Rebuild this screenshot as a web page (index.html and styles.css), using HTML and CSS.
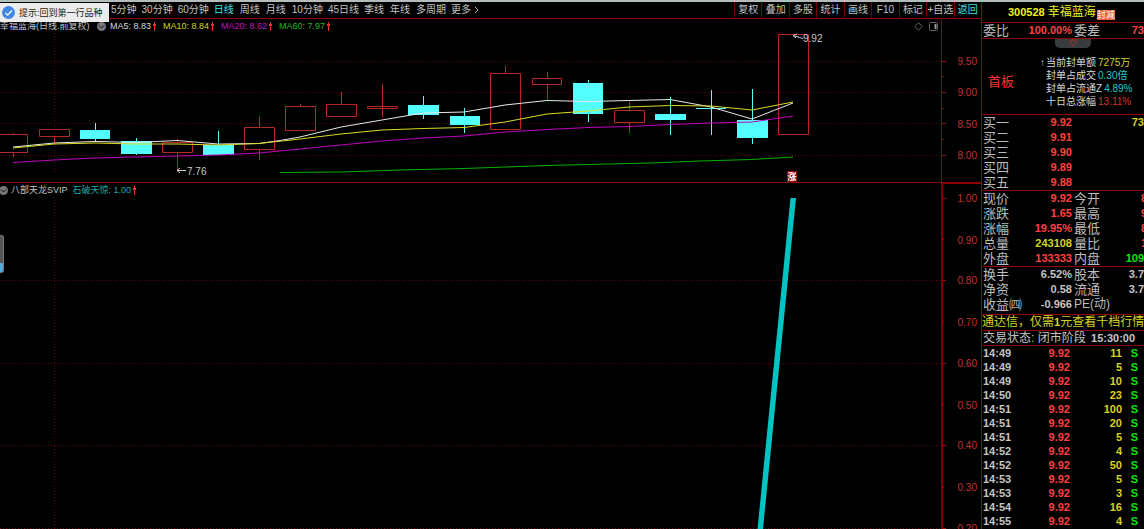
FILE: index.html
```html
<!DOCTYPE html>
<html lang="zh-CN">
<head>
<meta charset="utf-8">
<title>幸福蓝海 300528</title>
<link rel="stylesheet" href="styles.css">
</head>
<body>
<div class="app">
  <main class="main">
    <header class="toolbar">
      <nav class="periods">
        <button>5分钟</button><button>30分钟</button><button>60分钟</button><button class="short active">日线</button><button class="short">周线</button><button class="short">月线</button><button>10分钟</button><button>45日线</button><button class="short">季线</button><button class="short">年线</button><button>多周期</button><button class="more">更多<svg width="5" height="8" viewBox="0 0 5 8"><path d="M1 1l3 3-3 3" fill="none" stroke="#b8b8b8"/></svg></button>
      </nav>
      <div class="tools">
        <button>复权</button><button>叠加</button><button>多股</button><button>统计</button><button>画线</button><button>F10</button><button>标记</button><button>+自选</button><button class="active">返回</button>
      </div>
    </header>

    <section class="panel price">
      <div class="plot">
        <div class="legend">
          <span class="name">幸福蓝海(日线.前复权)</span>
          <svg class="drop" width="9" height="9" viewBox="0 0 9 9"><circle cx="4.5" cy="4.5" r="4.5" fill="#777"/><path d="M2 3.5l2.500 2.500 2.500-2.500" fill="none" stroke="#111"/></svg>
          <span class="ma white">MA5: 8.83<i class="up"></i></span>
          <span class="ma yellow">MA10: 8.84<i class="up"></i></span>
          <span class="ma magenta">MA20: 8.62<i class="up"></i></span>
          <span class="ma green">MA60: 7.97<i class="up"></i></span>
          <svg class="corner" width="25" height="9" viewBox="0 0 25 9" fill="none" stroke="#666"><path d="M4.500 .8l3.700 3.700-3.700 3.700L.8 4.500z"/><rect x="15.500" y=".5" width="8" height="8" rx="1"/><path d="M21.500 2v5" stroke="#999" stroke-width="2"/></svg>
        </div>
        <svg class="canvas" viewBox="0 33 941 149" preserveAspectRatio="xMaxYMin slice">
          <g class="grid"><path d="M0 61.500H941M0 92.500H941M0 123.500H941M0 155.500H941M54.500 33V172"/></g>
          <g class="rise">
            <path d="M-2 134.500H27.500V152.500H-2M13.500 133V134M13.500 153V157"/>
            <path d="M39.500 129.500h30v7h-30zM54.500 137V143"/>
            <path d="M162.500 142.500h30v10h-30zM177.500 139V142M177.500 153V171"/>
            <path d="M244.500 127.500h30v22h-30zM259.500 116V127M259.500 150V160"/>
            <path d="M285.500 106.500h30v24h-30zM300.500 104V106"/>
            <path d="M326.500 104.500h30v12h-30zM341.500 92V104"/>
            <path d="M367.500 106.500h30v2h-30zM382.500 84V117"/>
            <path d="M490.500 73.500h30v56h-30zM505.500 66V73"/>
            <path d="M532.500 78.500h29v6h-29zM547.500 72V78M547.500 85V101"/>
            <path d="M614.500 110.500h30v12h-30zM629.500 102V110M629.500 123V133"/>
            <path d="M778.500 34.500h30v100h-30z"/>
          </g>
          <g class="fall">
            <path d="M80 130h30v9H80zM95 123h1v19h-1z"/>
            <path d="M121 141h31v13h-31zM136 138h1v17h-1z"/>
            <path d="M203 145h31v10h-31zM218 131h1v24h-1z"/>
            <path d="M408 105h31v10h-31zM423 96h1v23h-1z"/>
            <path d="M450 116h30v9h-30zM464 108h1v25h-1z"/>
            <path d="M573 83h30v31h-30zM588 80h1v42h-1z"/>
            <path d="M655 114h31v6h-31zM670 97h1v38h-1z"/>
            <path d="M696 108h30v1h-30zM711 90h1v45h-1z"/>
            <path d="M737 120h31v18h-31zM752 89h1v55h-1z"/>
          </g>
          <g class="lines">
            <polyline stroke="#e8e8e8" points="13,147 54,143 95,141.500 136,142.500 177,140.500 218,144 259,143.500 280,140.500 300,137 341,127 382,120 423,113 464,112 505,105 547,100.500 588,101.500 629,100.500 670,99.500 711,107 752,119 793,103"/>
            <polyline stroke="#dada20" points="13,148 54,144 95,143 136,144 177,144 218,145 259,143.500 300,139 341,134 382,130 423,128.500 464,127.500 505,122 547,114 588,111 629,107 670,105.500 711,106 752,110 793,102"/>
            <polyline stroke="#c000c0" points="13,162.500 54,160 95,158 136,157 177,156 218,155 259,153 300,149 341,145 382,141 423,138 464,136 505,132 547,129.500 588,127.500 629,126.500 670,124.500 711,123 752,122 793,116"/>
            <polyline stroke="#00b000" points="280,172.500 341,172 400,170 464,168.500 547,165.500 588,164.500 650,163 700,161 752,159.500 793,157"/>
          </g>
          <g class="pointer"><path d="M177 170.500H186M180 168l-3 2.500 3 2.500"/><path d="M793 35.500l10 3M797 34l-4 1.500 3 2.500"/></g>
          <text class="mark" x="187" y="175">7.76</text>
          <text class="mark" x="803" y="42">9.92</text>
          <rect x="787" y="171" width="10" height="11" fill="#8c0000"/>
          <text class="flag" x="792" y="180" text-anchor="middle">涨</text>
        </svg>
      </div>
      <svg class="axis" viewBox="942 19 39 163" preserveAspectRatio="xMaxYMin slice">
        <path d="M942 61.500h4M942 76.500h2M942 92.500h4M942 108.500h2M942 123.500h4M942 139.500h2M942 155.500h4"/>
        <text x="977" y="65">9.50</text><text x="977" y="96">9.00</text><text x="977" y="128">8.50</text><text x="977" y="159">8.00</text>
      </svg>
    </section>

    <section class="panel signal">
      <div class="plot">
        <div class="legend">
          <svg class="drop" width="9" height="9" viewBox="0 0 9 9"><circle cx="4.500" cy="4.500" r="4.500" fill="#777"/><path d="M2 3.500l2.500 2.500 2.500-2.500" fill="none" stroke="#111"/></svg>
          <span class="formula">八部天龙SVIP</span>
          <span class="ma teal">石破天惊: 1.00<i class="up"></i></span>
        </div>
        <svg class="canvas" viewBox="0 197 941 332" preserveAspectRatio="xMaxYMin slice">
          <g class="grid"><path d="M0 280.500H941M0 363.500H941M0 445.500H941M0 528.500H941M54.500 197V529"/></g>
          <path d="M790.500 198H796L763 529h-5.500z" fill="#00c4c4"/>
        </svg>
      </div>
      <svg class="axis" viewBox="943 184 38 345" preserveAspectRatio="xMaxYMin slice">
        <path d="M943 198.500h3M943 239.500h1M943 280.500h3M943 321.500h1M943 363.500h3M943 404.500h1M943 445.500h3M943 487.500h1M943 528.500h3"/>
        <text x="977" y="202">1.00</text><text x="977" y="244">0.90</text><text x="977" y="284">0.80</text><text x="977" y="326">0.70</text><text x="977" y="367">0.60</text><text x="977" y="409">0.50</text><text x="977" y="449">0.40</text><text x="977" y="491">0.30</text><text x="977" y="532">0.20</text>
      </svg>
    </section>

    <div class="tip">
      <svg width="13" height="13" viewBox="0 0 13 13"><circle cx="6.500" cy="6.500" r="6.500" fill="#3f87e0"/><path d="M3.300 6.700l2.400 2.400 4.200-4.600" fill="none" stroke="#fff" stroke-width="1.300"/></svg>
      <span>提示:回到第一行品种</span>
    </div>
    <div class="handle"></div>
  </main>

  <aside class="quote">
    <h1 class="title"><b>300528</b> 幸福蓝海<span class="badge">封减</span></h1>
    <div class="rows one">
      <div class="row"><span>委比</span><b class="red">100.00%</b><span>委差</span><b class="red">73</b></div>
    </div>
    <div class="seal">
      <button class="fold" aria-label="收起"><svg width="10" height="7" viewBox="0 0 10 7"><path d="M1 3.500l4-3 4 3M3 4.500l2 2 2-2" fill="none" stroke="#d02828"/></svg></button>
      <strong class="board">首板</strong>
      <ul class="facts">
        <li class="first">当前封单额<em class="yellow">7275万</em></li>
        <li>封单占成交<em class="aqua">0.30倍</em></li>
        <li>封单占流通Z<em class="aqua">4.89%</em></li>
        <li>十日总涨幅<em class="crimson">13.11%</em></li>
      </ul>
    </div>
    <div class="rows">
      <div class="row"><span>买一</span><b class="red">9.92</b><span></span><b class="yellow">73</b></div>
      <div class="row"><span>买二</span><b class="red">9.91</b></div>
      <div class="row"><span>买三</span><b class="red">9.90</b></div>
      <div class="row"><span>买四</span><b class="red">9.89</b></div>
      <div class="row"><span>买五</span><b class="red">9.88</b></div>
    </div>
    <div class="rows">
      <div class="row"><span>现价</span><b class="red">9.92</b><span>今开</span><b class="red cut">8</b></div>
      <div class="row"><span>涨跌</span><b class="red">1.65</b><span>最高</span><b class="red cut">9</b></div>
      <div class="row"><span>涨幅</span><b class="red">19.95%</b><span>最低</span><b class="red cut">8</b></div>
      <div class="row"><span>总量</span><b class="yellow">243108</b><span>量比</span><b class="red cut">1</b></div>
      <div class="row"><span>外盘</span><b class="red">133333</b><span>内盘</span><b class="lime">109</b></div>
    </div>
    <div class="rows last">
      <div class="row"><span>换手</span><b>6.52%</b><span>股本</span><b>3.7</b></div>
      <div class="row"><span>净资</span><b>0.58</b><span>流通</span><b>3.7</b></div>
      <div class="row"><span>收益㈣</span><b>-0.966</b><span class="pe">PE(动)</span></div>
    </div>
    <a class="ticker" href="#">通达信，仅需<b>1</b>元查看千档行情</a>
    <p class="status">交易状态: 闭市阶段 <b>15:30:00</b></p>
    <table class="trades">
      <tr><td>14:49</td><td>9.92</td><td>11</td><td>S</td></tr>
      <tr><td>14:49</td><td>9.92</td><td>5</td><td>S</td></tr>
      <tr><td>14:49</td><td>9.92</td><td>10</td><td>S</td></tr>
      <tr><td>14:50</td><td>9.92</td><td>23</td><td>S</td></tr>
      <tr><td>14:51</td><td>9.92</td><td>100</td><td>S</td></tr>
      <tr><td>14:51</td><td>9.92</td><td>20</td><td>S</td></tr>
      <tr><td>14:51</td><td>9.92</td><td>5</td><td>S</td></tr>
      <tr><td>14:52</td><td>9.92</td><td>4</td><td>S</td></tr>
      <tr><td>14:52</td><td>9.92</td><td>50</td><td>S</td></tr>
      <tr><td>14:53</td><td>9.92</td><td>5</td><td>S</td></tr>
      <tr><td>14:53</td><td>9.92</td><td>3</td><td>S</td></tr>
      <tr><td>14:54</td><td>9.92</td><td>16</td><td>S</td></tr>
      <tr><td>14:55</td><td>9.92</td><td>4</td><td>S</td></tr>
    </table>
  </aside>
</div>
</body>
</html>
```
FILE: styles.css
```css
* { box-sizing: border-box; }
body, h1, ul, p { margin: 0; padding: 0; }
body {
  background: #000;
  color: #c4c4c4;
  font: 9px/14px "Liberation Sans", "Noto Sans CJK SC", sans-serif;
  overflow: hidden;
}
button {
  padding: 0;
  border: 0;
  background: none;
  color: inherit;
  font: inherit;
  white-space: nowrap;
}
svg { display: block; }

.app {
  display: flex;
  height: 100vh;
  border-top: 2px solid #b4bcbc;
}
.main {
  position: relative;
  display: flex;
  flex: 1;
  flex-direction: column;
  min-width: 0;
}

/* toolbar */
.toolbar {
  display: flex;
  flex: none;
  justify-content: space-between;
  height: 17px;
  padding-left: 111px;
  border-bottom: 1px solid #900000;
  font-size: 10px;
}
.periods {
  display: flex;
  align-items: center;
  gap: 5px;
}
.periods .short { padding-right: 1px; }
.more { display: flex; align-items: center; gap: 3px; }
.toolbar .active { color: #40e0e8; }
.tools {
  display: grid;
  grid-template-columns: repeat(9, 1fr);
  width: 247px;
}
.tools button { border-left: 1px solid #700000; }

/* chart panels */
.panel { display: grid; min-height: 0; }
.price {
  flex: none;
  grid-template-columns: 1fr 40px;
  height: 164px;
  border-bottom: 1px solid #900000;
}
.signal { flex: 1; grid-template-columns: 1fr 40px; }
.plot { display: flex; flex-direction: column; min-width: 0; min-height: 0; }
.canvas { flex: 1; width: 100%; min-height: 0; }
.axis { width: 100%; height: 100%; min-height: 0; border-left: 1px solid #800000; }
.signal .axis { border-left-width: 2px; border-top: 1px solid #900000; }
.axis path { stroke: #a01010; }
.axis text { fill: #c83030; font-size: 10px; text-anchor: end; }

.legend {
  display: flex;
  align-items: center;
  height: 14px;
  flex: none;
  white-space: nowrap;
}
.legend .name { width: 97px; }
.drop { flex: none; }
.ma { display: flex; align-items: center; gap: 2px; margin-right: 7px; }
.legend .drop + .ma { margin-left: 4px; }
.up {
  display: block;
  width: 3px;
  height: 9px;
  background:
    linear-gradient(#f03030, #f03030) center / 1px 100% no-repeat,
    linear-gradient(#f03030, #f03030) 0 2px / 3px 2px no-repeat;
}
.signal .drop { margin-left: -1px; }
.formula { margin: 0 5px 0 3px; }
.corner { margin-left: auto; margin-right: 2px; }

.grid path { fill: none; stroke: #5c0a0a; stroke-dasharray: 1 2; }
.rise path { fill: none; stroke: #b42828; }
.fall path { fill: #54ffff; }
.lines polyline { fill: none; stroke-width: 1; }
.pointer path { fill: none; stroke: #c8c8c8; }
.mark { fill: #c8c8c8; font-size: 10px; }
.flag { fill: #fff; font-size: 9px; font-weight: bold; }

/* overlays on the chart */
.tip {
  position: absolute;
  top: 1px;
  left: 0;
  display: flex;
  align-items: center;
  gap: 4px;
  height: 19px;
  padding: 0 6px 0 2px;
  background: #ececec;
  color: #222;
  white-space: nowrap;
}
.handle {
  position: absolute;
  top: 233px;
  left: 0;
  width: 4px;
  height: 38px;
  border: 1px solid #777;
  border-left: 0;
  border-radius: 0 3px 3px 0;
  background: linear-gradient(#555 76%, #58a8e0 76%);
}

/* colours */
.white { color: #d8d8d8; }
.yellow { color: #d4d420; }
.magenta { color: #c010c0; }
.green { color: #20b820; }
.teal { color: #18a8a8; }
.aqua { color: #20c8d0; }
.red { color: #ff4040; }
.crimson { color: #d83030; }
.lime { color: #10e010; }

/* quote panel */
.quote {
  flex: none;
  width: 163px;
  border-left: 1px solid #900000;
  overflow: hidden;
  font-size: 13px;
  line-height: 15px;
  white-space: nowrap;
}
.quote b { font-size: 11px; }
.title {
  display: flex;
  align-items: center;
  gap: 3px;
  height: 21px;
  padding-left: 26px;
  border-bottom: 1px solid #900000;
  color: #f0f020;
  font-size: 12px;
  font-weight: normal;
}
.badge {
  align-self: flex-end;
  margin: 0 0 2px -2px;
  background: #e86038;
  color: #fff;
  font-size: 9px;
  line-height: 10px;
}
.rows { border-bottom: 1px solid #900000; }
.rows.last { padding-bottom: 2px; }
.row {
  display: grid;
  grid-template-columns: 36px 52px 40px 1fr;
  column-gap: 1px;
  height: 15px;
  padding-left: 1px;
}
.row span { color: #bcbcbc; }
.row span:nth-child(3) { margin-left: 1px; }
.row .pe { font-size: 12px; }
.row b { justify-self: end; }
.row .cut { margin-right: -3px; }

.seal {
  position: relative;
  display: flex;
  align-items: center;
  gap: 32px;
  height: 76px;
  padding: 10px 0 0 6px;
  border-bottom: 1px solid #900000;
}
.fold {
  position: absolute;
  top: 0;
  left: 73px;
  display: flex;
  justify-content: center;
  width: 36px;
  height: 9px;
  border-radius: 0 0 5px 5px;
  background: #383c3e;
}
.board { color: #ff3030; font-weight: normal; }
.facts { list-style: none; font-size: 10px; line-height: 13px; color: #d8d8d8; }
.facts em { margin-left: 2px; font-style: normal; }
.facts .first::before {
  content: "↑";
  position: absolute;
  margin-left: -6px;
}

.ticker {
  display: block;
  height: 16px;
  border-bottom: 1px solid #900000;
  color: #d4d420;
  font-size: 12px;
  text-decoration: none;
}
.status {
  height: 15px;
  padding-left: 1px;
  border-bottom: 1px solid #900000;
  font-size: 12px;
  line-height: 14px;
}
.status b { margin-left: 2px; }
.trades {
  border-collapse: collapse;
  width: 156px;
  font: bold 11px/14px "Liberation Sans", sans-serif;
  text-align: right;
}
.trades td { padding: 0; height: 14px; }
.trades td:nth-child(1) { width: 36px; padding-left: 1px; text-align: left; }
.trades td:nth-child(2) { width: 52px; color: #ff4040; }
.trades td:nth-child(3) { width: 52px; color: #d4d420; }
.trades td:nth-child(4) { color: #10e010; }
```
